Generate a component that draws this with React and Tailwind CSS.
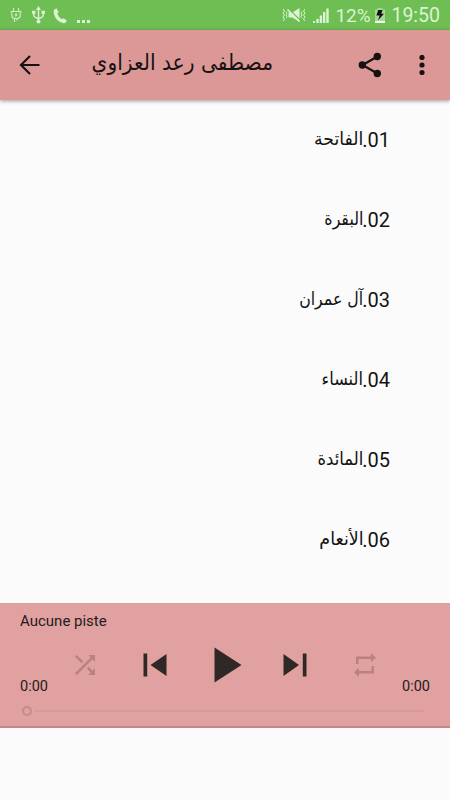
import React from 'react';

const tracks = [
    { number: '01', name: 'الفاتحة', fit: 'scale-x-[0.96]' },
    { number: '02', name: 'البقرة', fit: 'scale-x-[0.88]' },
    { number: '03', name: 'آل عمران', fit: 'scale-x-[0.875]' },
    { number: '04', name: 'النساء', fit: 'scale-x-[0.9]' },
    { number: '05', name: 'المائدة', fit: 'scale-x-[0.91]' },
    { number: '06', name: 'الأنعام', fit: 'scale-x-[0.97]' },
];

const StatusBar = () => (
    <div className="flex h-[30px] items-center justify-between bg-[#6fbe53] pl-2.5 pr-2.5 text-[#dcf3d3]">
        <div className="flex items-center">
            {/* Charger plug */}
            <svg width="12" height="16" viewBox="0 0 12 16" fill="none" stroke="currentColor" className="opacity-90">
                <path d="M3.5 1v3M8.5 1v3M0.5 4.5h11M1.8 4.5v4q0 3 3 3h2.4q3 0 3-3v-4M4.5 11.5v3.5M7 11.5v2" strokeWidth="1.1" />
                <path d="M6.6 5.2L4.2 8.4h1.6L5 10.8 8 7.6H6.3z" fill="currentColor" stroke="none" />
            </svg>
            {/* USB */}
            <svg width="13" height="18" viewBox="0 0 13 18" fill="none" stroke="currentColor" className="ml-[10px]">
                <path d="M6.5 2v13M1.8 6v3.2q0 2 4.7 3.3M11.2 6v3.2q0 2-4.7 3.3" strokeWidth="1.4" />
                <path d="M6.5 0L9 4H4zM0 4.8h3.5v3H0zM9.5 4.8H13v3H9.5z" fill="currentColor" stroke="none" />
                <circle cx="6.5" cy="15.6" r="2" fill="currentColor" stroke="none" />
            </svg>
            {/* Phone */}
            <svg width="15" height="16" viewBox="0 0 15 16" fill="currentColor" className="ml-[8px] mt-px">
                <path d="M0.8 2L3.5 0.3 5.6 4.2 4.2 5.6Q5.2 9.3 9 11.3L10.6 10.2 14 12.8 12 15Q8.5 16 4.6 12.3 0 7.8 0.8 2z" />
            </svg>
            <div className="ml-[9px] mt-[13px] flex gap-[2px]">
                <span className="h-[3px] w-[3px] bg-current" />
                <span className="h-[3px] w-[3px] bg-current" />
                <span className="h-[3px] w-[3px] bg-current" />
            </div>
        </div>
        <div className="flex items-center">
            {/* Muted with vibration */}
            <svg width="24" height="16" viewBox="0 0 24 16" className="mr-[7px]" fill="none" stroke="currentColor">
                <path d="M1 2l1.5 2L1 6l1.5 2L1 10l1.5 2L1 14M4 4.5l1 1.5-1 1.8 1 1.7-1 1.5M20 4.5L19 6l1 1.8-1 1.7 1 1.5M23 2l-1.5 2L23 6l-1.5 2 1.5 2-1.5 2 1.5 2" />
                <path d="M6.5 5.5h4L17.5 1v14l-7-4.5h-4z" fill="currentColor" stroke="none" />
                <path d="M6.5 1.8l12.3 12" stroke="#6fbe53" strokeWidth="1.2" />
                <path d="M5.5 2.5l12 12" strokeWidth="1.5" />
            </svg>
            {/* Signal */}
            <svg width="16" height="15" viewBox="0 0 16 15" fill="currentColor" className="mr-[6px]">
                <path d="M0 13h2v2H0zM3.3 11h2.4v4H3.3zM6.7 7.5h2.4V15H6.7zM10 4h2.4v11H10zM13.3 0.5h2.4V15h-2.4z" />
            </svg>
            <span className="mt-px w-[36px] whitespace-nowrap text-[19px] leading-none">12%</span>
            {/* Battery */}
            <svg width="10" height="15" viewBox="0 0 10 15" className="ml-[4px] mr-[6px]">
                <path d="M2.5 0h5v1.5H10V15H0V1.5h2.5z" fill="#a7d796" />
                <path d="M0 13h10v2H0z" fill="#f2faef" />
                <path d="M3.2 2h4.3L6.3 5.7H9L3.1 12.2 4.6 7.6H1.4z" fill="#101410" />
            </svg>
            <span className="mt-[2px] text-[19.5px] leading-none">19:50</span>
        </div>
    </div>
);

const Toolbar = () => (
    <header className="relative flex h-[70px] items-center bg-[#dc9896] pl-[19px] pr-[25px] text-[#161212] shadow-[0_1px_4px_rgba(0,0,0,0.4)]">
        <button aria-label="Retour">
            <svg width="21" height="20" viewBox="0 0 21 20" fill="none" stroke="currentColor" strokeWidth="2.2">
                <path d="M20.5 10H2M11 1L2 10l9 9" />
            </svg>
        </button>
        <h1
            dir="rtl"
            className="ml-[52px] w-[181px] origin-right scale-x-[0.92] whitespace-nowrap pb-[4px] font-['DejaVu_Sans',sans-serif] text-[22px] leading-none"
        >
            مصطفى رعد العزاوي
        </h1>
        <button aria-label="Partager" className="ml-auto">
            <svg width="24" height="26" viewBox="0 0 24 26" fill="currentColor">
                <path d="M19.5 4.5L4.5 13l15 8.5" fill="none" stroke="currentColor" strokeWidth="2.2" />
                <circle cx="19.3" cy="4.5" r="3.7" />
                <circle cx="4.3" cy="13" r="3.7" />
                <circle cx="19.3" cy="21.5" r="3.7" />
            </svg>
        </button>
        <button aria-label="Menu" className="ml-[37px]">
            <svg width="6" height="20" viewBox="0 0 6 20" fill="currentColor">
                <circle cx="3" cy="2.5" r="2.6" />
                <circle cx="3" cy="10" r="2.6" />
                <circle cx="3" cy="17.5" r="2.6" />
            </svg>
        </button>
    </header>
);

const Player = () => (
    <section className="h-[125px] border-b-2 border-t border-b-[#c28887] border-t-[#d3a5a4] bg-[#e0a1a0] px-5 pt-[7px] text-[#241c1c]">
        <p className="text-[15px] leading-[20px]">Aucune piste</p>
        <div className="flex h-[68px] items-end justify-between">
            <span className="pb-[3px] text-[14.5px] leading-[18px]">0:00</span>
            <div className="flex h-[68px] items-center">
                {/* Shuffle */}
                <svg width="20" height="20" viewBox="4 4 16 16" fill="#b98281">
                    <path d="M10.59 9.17L5.41 4 4 5.41l5.17 5.17 1.42-1.41zM14.5 4l2.04 2.04L4 18.59 5.41 20 17.96 7.46 20 9.5V4h-5.5zm.33 9.41l-1.41 1.41 3.13 3.13L14.5 20H20v-5.5l-2.04 2.04-3.13-3.13z" />
                </svg>
                <svg width="24" height="24" viewBox="0 0 24 24" fill="#302827" className="ml-[48px]">
                    <path d="M0.5 0.5h3.7v23H0.5zM23.5 1v22L7.5 12z" />
                </svg>
                <svg width="28" height="36" viewBox="0 0 28 36" fill="#302827" className="ml-[47px]">
                    <path d="M0.5 0.5L27.5 18 0.5 35.5z" />
                </svg>
                <svg width="24" height="24" viewBox="0 0 24 24" fill="#302827" className="ml-[41px]">
                    <path d="M0.5 1L16 12 0.5 23zM19.8 0.5h3.7v23h-3.7z" />
                </svg>
                {/* Repeat */}
                <svg width="22" height="24" viewBox="0 0 22 24" fill="#b98281" className="ml-[47px]">
                    <path d="M2 3.5h15V0l5 4.7-5 4.6V6H4.5v5H2zM20 20.5H5V24L0 19.3l5-4.6V18h12.5v-5H20z" />
                </svg>
            </div>
            <span className="pb-[3px] text-[14.5px] leading-[18px]">0:00</span>
        </div>
        <div className="flex items-center pl-[2px] pr-[6px] pt-[7px]">
            <span className="h-[10px] w-[10px] rounded-full border-2 border-[#c58b8a]" />
            <span className="ml-[2px] h-[2px] flex-1 bg-[#d69b9a]" />
        </div>
    </section>
);

const App = () => (
    <div className="flex h-[800px] w-[450px] flex-col overflow-hidden bg-[#fbfbfb] font-['Roboto',sans-serif]">
        <StatusBar />
        <Toolbar />
        <main className="flex-1 overflow-hidden">
            {tracks.map((track) => (
                <div
                    key={track.number}
                    dir="rtl"
                    className="flex h-20 items-center whitespace-nowrap pr-[60px] text-[20px] leading-none text-[#121212]"
                >
                    <span>{track.number}.</span>
                    <span
                        className={`-mr-px origin-right pb-[2px] font-['DejaVu_Sans',sans-serif] text-[18px] leading-none ${track.fit}`}
                    >
                        {track.name}
                    </span>
                </div>
            ))}
        </main>
        <Player />
        <div className="h-[72px]" />
    </div>
);

export default App;
